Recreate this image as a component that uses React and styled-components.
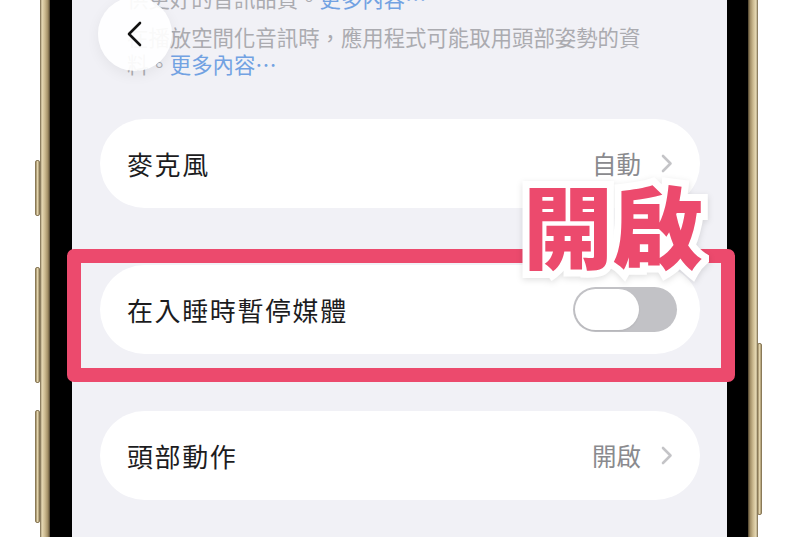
import React from "react";
import styled, { createGlobalStyle } from "styled-components";

const Global = createGlobalStyle`
  html, body { margin: 0; padding: 0; background: #ffffff; }
  body { font-family: "Noto Sans CJK TC", "Noto Sans", sans-serif; }
  * { box-sizing: border-box; }
`;

const Page = styled.div`
  width: 800px;
  height: 537px;
  overflow: hidden;
  background: #ffffff;
  display: flex;
  padding-left: 40px;
`;

const Shell = styled.div`
  position: relative;
  width: 718px;
  height: 537px;
  display: flex;
  padding: 0 10px;
  background:
    linear-gradient(90deg, #6f6146 0, #e6d9b4 2px, #cbb98f 5px, #9e8b63 8px, #4a3f2b 10px, transparent 10px),
    linear-gradient(270deg, #6f6146 0, #e6d9b4 2px, #cbb98f 5px, #9e8b63 8px, #4a3f2b 10px, transparent 10px);
`;

const SideButton = styled.div`
  position: absolute;
  top: ${(p) => p.$top}px;
  height: ${(p) => p.$h}px;
  width: 5px;
  ${(p) => (p.$right ? "right: -4px;" : "left: -5px;")}
  border-radius: 2px;
  background: linear-gradient(90deg, #9c8a63, #e2d4ad 50%, #a8966d);
  border: 1px solid #8a7a58;
`;

const Bezel = styled.div`
  flex: 1;
  display: flex;
  background: #000;
  padding: 0 21px 0 22px;
`;

const Screen = styled.div`
  position: relative;
  flex: 1;
  background: #f1f1f6;
  display: flex;
  flex-direction: column;
`;

const Footnote = styled.div`
  margin-top: -16px;
  padding-left: 55px;
  font-size: 21.4px;
  line-height: 27px;
  color: #ababb0;
  display: flex;
  flex-direction: column;
  gap: 12px;
`;

const Para = styled.p`
  margin: 0;
  white-space: nowrap;
`;

const Link = styled.span`
  color: #72a2e2;
`;

const List = styled.div`
  margin-top: 42px;
  display: flex;
  flex-direction: column;
  gap: 57px;
  padding: 0 27px 0 28px;
`;

const Card = styled.div`
  height: 89px;
  border-radius: 44.5px;
  background: #ffffff;
  display: flex;
  align-items: center;
  justify-content: space-between;
  padding: 0 ${(p) => (p.$toggle ? 23 : 27)}px 0 27px;
`;

const Label = styled.span`
  font-size: 26px;
  color: #1c1c1e;
  letter-spacing: 1.6px;
`;

const Value = styled.span`
  display: flex;
  align-items: center;
  gap: 20px;
  font-size: 24.5px;
  color: #8a8a8e;
`;

const Chevron = () => (
  <svg width="12" height="19" viewBox="0 0 12 19" fill="none">
    <path d="M2 2l7.5 7.5L2 17" stroke="#c4c4c7" strokeWidth="2.6" strokeLinecap="round" strokeLinejoin="round" />
  </svg>
);

const Toggle = styled.div`
  width: 104px;
  height: 45px;
  border-radius: 22.5px;
  background: #c2c2c6;
  padding: 2px;
  display: flex;
`;

const Knob = styled.div`
  width: 64px;
  height: 41px;
  border-radius: 20.5px;
  background: #ffffff;
  box-shadow: 0 1px 2px rgba(0, 0, 0, 0.08);
`;

const Highlight = styled.div`
  position: relative;
`;

const PinkFrame = styled.div`
  position: absolute;
  left: -33px;
  right: -35px;
  top: -16px;
  bottom: -28px;
  border: 14px solid #ec4a6d;
  border-radius: 7px;
  pointer-events: none;
`;

const Callout = styled.div`
  position: absolute;
  left: 423px;
  top: -87px;
  font-size: 90px;
  line-height: 1;
  font-weight: 900;
  color: #ec4a6d;
  white-space: nowrap;
  -webkit-text-stroke: 14px #ffffff;
  paint-order: stroke fill;
  filter: drop-shadow(0 2px 3px rgba(0, 0, 0, 0.12));
`;

const BackButton = styled.div`
  position: absolute;
  left: 26px;
  top: -3px;
  width: 74px;
  height: 74px;
  border-radius: 50%;
  background: rgba(255, 255, 255, 0.92);
  box-shadow: 0 4px 14px rgba(0, 0, 0, 0.06);
  display: flex;
  align-items: center;
  justify-content: center;
`;

export default function App() {
  return (
    <>
      <Global />
      <Page>
        <Shell>
          <SideButton $top={160} $h={56} />
          <SideButton $top={267} $h={116} />
          <SideButton $top={410} $h={113} />
          <SideButton $right $top={343} $h={172} />
          <Bezel>
            <Screen>
              <Footnote>
                <Para>
                  供更好的音訊品質。<Link>更多內容⋯</Link>
                </Para>
                <Para>
                  在播放空間化音訊時，應用程式可能取用頭部姿勢的資
                  <br />
                  料。<Link>更多內容⋯</Link>
                </Para>
              </Footnote>
              <List>
                <Card>
                  <Label>麥克風</Label>
                  <Value>
                    自動
                    <Chevron />
                  </Value>
                </Card>
                <Highlight>
                  <Card $toggle>
                    <Label>在入睡時暫停媒體</Label>
                    <Toggle>
                      <Knob />
                    </Toggle>
                  </Card>
                  <PinkFrame />
                  <Callout>開啟</Callout>
                </Highlight>
                <Card>
                  <Label>頭部動作</Label>
                  <Value>
                    開啟
                    <Chevron />
                  </Value>
                </Card>
              </List>
              <BackButton>
                <svg width="20" height="26" viewBox="0 0 20 26" fill="none">
                  <path d="M15 2L4 13l11 11" stroke="#111" strokeWidth="2.6" strokeLinecap="round" strokeLinejoin="round" />
                </svg>
              </BackButton>
            </Screen>
          </Bezel>
        </Shell>
      </Page>
    </>
  );
}
